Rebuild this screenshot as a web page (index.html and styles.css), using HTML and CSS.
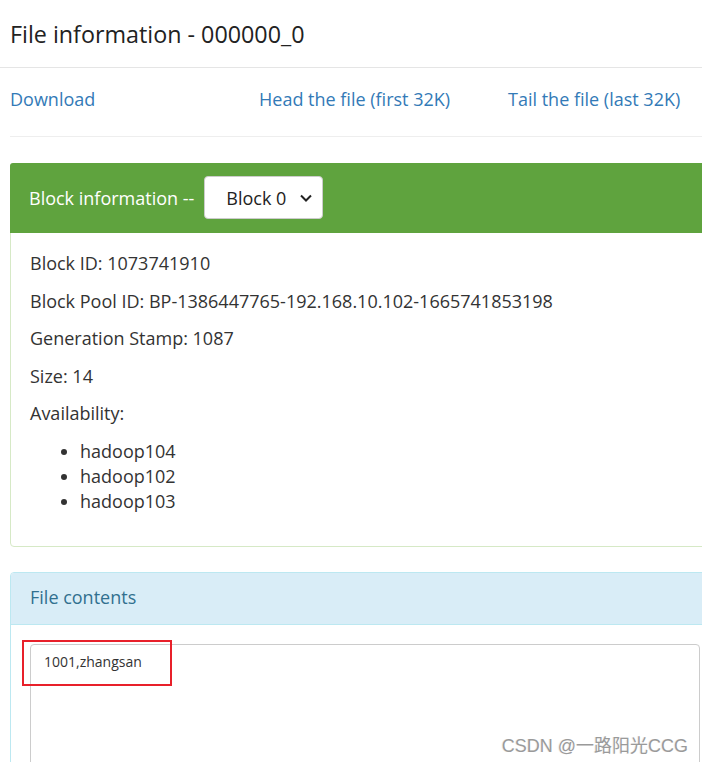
FILE: index.html
```html
<!DOCTYPE html>
<html>
<head>
<meta charset="utf-8">
<link rel="stylesheet" href="styles.css">
</head>
<body>
<div class="modal">
  <div class="modal-header">
    <h4 class="title">File information - 000000_0</h4>
  </div>
  <div class="modal-body">
    <div class="links">
      <a href="#">Download</a>
      <a href="#">Head the file (first 32K)</a>
      <a href="#">Tail the file (last 32K)</a>
    </div>
    <hr class="sep">
    <div class="panel panel-success">
      <div class="panel-heading">
        <span>Block information --</span>
        <div class="select">
          <span>Block 0</span>
          <svg width="14" height="10" viewBox="0 0 14 10"><path d="M2 2.5 L7 7.5 L12 2.5" fill="none" stroke="#222" stroke-width="2"/></svg>
        </div>
      </div>
      <div class="panel-body">
        <p>Block ID: 1073741910</p>
        <p>Block Pool ID: BP-1386447765-192.168.10.102-1665741853198</p>
        <p>Generation Stamp: 1087</p>
        <p>Size: 14</p>
        <p>Availability:</p>
        <ul>
          <li>hadoop104</li>
          <li>hadoop102</li>
          <li>hadoop103</li>
        </ul>
      </div>
    </div>
    <div class="panel panel-info">
      <div class="panel-heading">File contents</div>
      <div class="panel-body contents">
        <div class="textarea">1001,zhangsan</div>
        <div class="mark"></div>
      </div>
    </div>
  </div>
</div>
<div class="watermark">CSDN @一路阳光CCG</div>
</body>
</html>
```

FILE: styles.css
```css
html, body {
  margin: 0;
  padding: 0;
  background: #fff;
  overflow: hidden;
  width: 702px;
  height: 762px;
}
body {
  font-family: "Open Sans", "Noto Sans", "Noto Sans CJK SC", sans-serif;
  color: #333;
  font-size: 18px;
  position: relative;
}
.modal {
  width: 702px;
  overflow: hidden;
  height: 762px;
}
.modal-header {
  padding: 16px 10px 15px;
  border-bottom: 1px solid #e5e5e5;
}
.title {
  margin: 0;
  font-weight: normal;
  font-size: 23.3px;
  line-height: 36px;
  color: #222;
}
.modal-body {
  padding: 0 10px;
  width: 747px;
}
.links {
  display: grid;
  grid-template-columns: 249px 249px 249px;
  padding: 19px 0 25px;
  line-height: 24px;
  font-size: 18px;
}
.links a {
  color: #337ab7;
  text-decoration: none;
}
.sep {
  margin: 0 0 26px;
  border: 0;
  border-top: 1px solid #eee;
}
.panel {
  border: 1px solid #d6e9c6;
  border-radius: 4px;
  margin-bottom: 25px;
}
.panel-success .panel-heading {
  background: #5fa33e;
  color: #fff;
  padding: 13px 19px 14px;
  display: flex;
  align-items: center;
  gap: 10px;
  border-radius: 3px 3px 0 0;
  font-size: 18px;
  margin: -1px -1px 0;
}
.select {
  width: 119px;
  height: 43px;
  box-sizing: border-box;
  background: #fff;
  border-radius: 4px;
  border: 1px solid #ccc;
  color: #222;
  display: flex;
  align-items: center;
  justify-content: space-between;
  padding: 0 9px 0 21px;
  font-size: 18px;
}
.select svg {
  display: block;
}
.panel-body {
  padding: 18px 19px 20px;
}
.panel-body p {
  margin: 0 0 12.5px;
  line-height: 25px;
}
.panel-body ul {
  margin: 0 0 12.5px;
  padding-left: 50px;
  line-height: 25px;
}
.panel-info {
  border-color: #bce8f1;
}
.panel-info .panel-heading {
  background: #d9edf7;
  color: #31708f;
  padding: 12px 19px 14px;
  line-height: 25px;
  border-bottom: 1px solid #bce8f1;
  border-radius: 3px 3px 0 0;
}
.contents {
  position: relative;
  padding: 19px 19px 40px;
}
.textarea {
  width: 670px;
  height: 140px;
  box-sizing: border-box;
  border: 1px solid #ccc;
  border-radius: 4px;
  padding: 7px 13px;
  font-size: 14px;
  line-height: 20px;
  color: #333;
}
.mark {
  position: absolute;
  left: 11px;
  top: 15px;
  width: 150px;
  height: 46px;
  box-sizing: border-box;
  border: 2px solid #e8202a;
}
.watermark {
  position: absolute;
  right: 14px;
  top: 731px;
  font-family: "Liberation Sans", "Noto Sans CJK SC", sans-serif;
  font-size: 18px;
  color: #9a9a9a;
  text-shadow: 1px 1px 0 #fff, -1px 0 0 #eee;
}
```
